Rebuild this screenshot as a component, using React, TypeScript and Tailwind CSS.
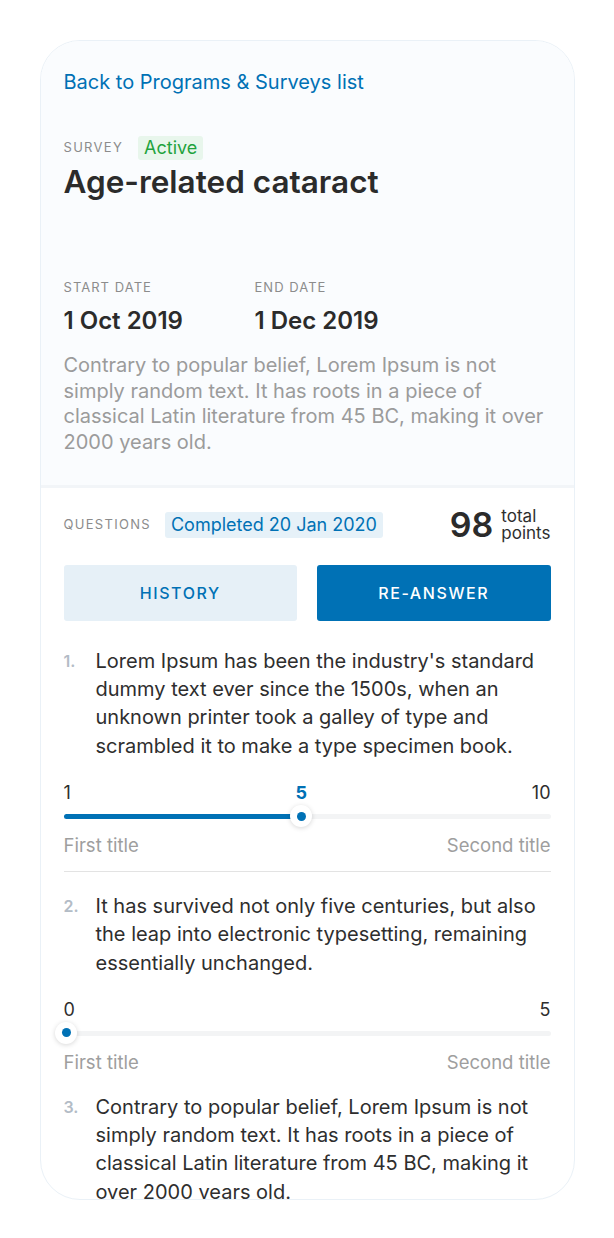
import React from 'react';

const questions = [
  {
    n: 1,
    text: "Lorem Ipsum has been the industry's standard dummy text ever since the 1500s, when an unknown printer took a galley of type and scrambled it to make a type specimen book.",
    min: '1',
    max: '10',
    value: '5',
    pos: 48.8,
    divider: true,
  },
  {
    n: 2,
    text: 'It has survived not only five centuries, but also the leap into electronic typesetting, remaining essentially unchanged.',
    min: '0',
    max: '5',
    value: null,
    pos: 0.6,
    divider: false,
  },
];

function Slider({ q }: { q: (typeof questions)[number] }) {
  return (
    <div className="mt-[21px]">
      <div className="relative flex justify-between text-[18px] leading-[24px] text-[#2e2e2e]">
        <span>{q.min}</span>
        {q.value && (
          <span
            className="absolute top-0 -translate-x-1/2 font-bold text-[#0071b5]"
            style={{ left: `${q.pos}%` }}
          >
            {q.value}
          </span>
        )}
        <span>{q.max}</span>
      </div>
      <div className="relative h-[22px]">
        <div className="absolute left-0 right-0 top-[9px] h-[5px] rounded-full bg-[#f3f4f5]" />
        <div
          className="absolute left-0 top-[9px] h-[5px] rounded-full bg-[#0071b5]"
          style={{ width: `${q.pos}%` }}
        />
        <div
          className="absolute top-0 flex h-[22px] w-[22px] -translate-x-1/2 items-center justify-center rounded-full bg-white shadow-[0_1px_5px_rgba(0,0,0,0.16)]"
          style={{ left: `${q.pos}%` }}
        >
          <div className="h-[9px] w-[9px] rounded-full bg-[#0071b5]" />
        </div>
      </div>
      <div className="mt-[6px] flex justify-between text-[18.5px] leading-[24px] text-[#9e9e9e]">
        <span>First title</span>
        <span>Second title</span>
      </div>
    </div>
  );
}

function Question({ n, text }: { n: number; text: string }) {
  return (
    <div className="flex">
      <span className="w-[32px] shrink-0 text-[16px] leading-[28.3px] font-semibold text-[#b3bcc6]">{n}.</span>
      <p className="text-[20px] leading-[28.3px] text-[#2e2e2e]">{text}</p>
    </div>
  );
}

export default function App() {
  return (
    <div className="min-h-[1238px] bg-white pt-[40px] font-['Inter',sans-serif]">
      <div className="mx-auto h-[1160px] w-[535px] overflow-hidden rounded-[40px] border border-[#eaf1f7] bg-white">
        <div className="border-b-[3px] border-[#f2f5f8] bg-[#fafcfe] px-[23px] pt-[27px] pb-[29px]">
          <a className="block text-[20px] leading-[28px] text-[#0071b5]">Back to Programs &amp; Surveys list</a>
          <div className="mt-[40px] flex items-center gap-[15px]">
            <span className="text-[13px] tracking-[0.1em] text-[#8c8c8c]">SURVEY</span>
            <span className="h-[24px] rounded-[3px] bg-[#e8f6ec] px-[6px] text-[18px] leading-[24px] text-[#1fa33d]">Active</span>
          </div>
          <h1 className="mt-[2px] text-[31.5px] leading-[40px] font-semibold text-[#2b2b2b]">Age-related cataract</h1>
          <div className="mt-[77px] flex">
            <div className="w-[191px]">
              <div className="text-[13px] leading-[16px] tracking-[0.08em] text-[#8c8c8c]">START DATE</div>
              <div className="mt-[10px] text-[24px] leading-[32px] font-semibold text-[#2b2b2b]">1 Oct 2019</div>
            </div>
            <div>
              <div className="text-[13px] leading-[16px] tracking-[0.08em] text-[#8c8c8c]">END DATE</div>
              <div className="mt-[10px] text-[24px] leading-[32px] font-semibold text-[#2b2b2b]">1 Dec 2019</div>
            </div>
          </div>
          <p className="mt-[16px] text-[20px] leading-[25.7px] text-[#9b9b9b]">
            Contrary to popular belief, Lorem Ipsum is not simply random text. It has roots in a piece of classical Latin literature from 45 BC, making it over 2000 years old.
          </p>
        </div>

        <div className="px-[23px] pt-[17px]">
          <div className="flex h-[40px] items-center">
            <span className="text-[13px] tracking-[0.1em] text-[#8c8c8c]">QUESTIONS</span>
            <span className="ml-[14px] h-[26px] rounded-[3px] bg-[#e6f1f8] px-[6px] text-[18px] leading-[26px] text-[#0071b5]">
              Completed 20 Jan 2020
            </span>
            <div className="ml-auto flex items-center gap-[8px]">
              <span className="text-[34px] leading-[40px] font-semibold text-[#2b2b2b]">98</span>
              <span className="text-[17px] leading-[17px] text-[#2e2e2e]">
                total
                <br />
                points
              </span>
            </div>
          </div>

          <div className="mt-[20px] grid grid-cols-2 gap-[20px]">
            <button className="h-[56px] rounded-[3px] bg-[#e6f0f7] text-[16px] font-medium tracking-[0.1em] text-[#0071b5]">HISTORY</button>
            <button className="h-[56px] rounded-[3px] bg-[#0071b5] text-[16px] font-medium tracking-[0.1em] text-white">RE-ANSWER</button>
          </div>

          <div className="mt-[26px]">
            {questions.map((q) => (
              <div key={q.n}>
                <Question n={q.n} text={q.text} />
                <Slider q={q} />
                {q.divider && <div className="mt-[14px] mb-[20px] h-[1px] bg-[#e3e3e3]" />}
              </div>
            ))}
            <div className="mt-[19px]">
              <Question
                n={3}
                text="Contrary to popular belief, Lorem Ipsum is not simply random text. It has roots in a piece of classical Latin literature from 45 BC, making it over 2000 years old."
              />
            </div>
          </div>
        </div>
      </div>
    </div>
  );
}
